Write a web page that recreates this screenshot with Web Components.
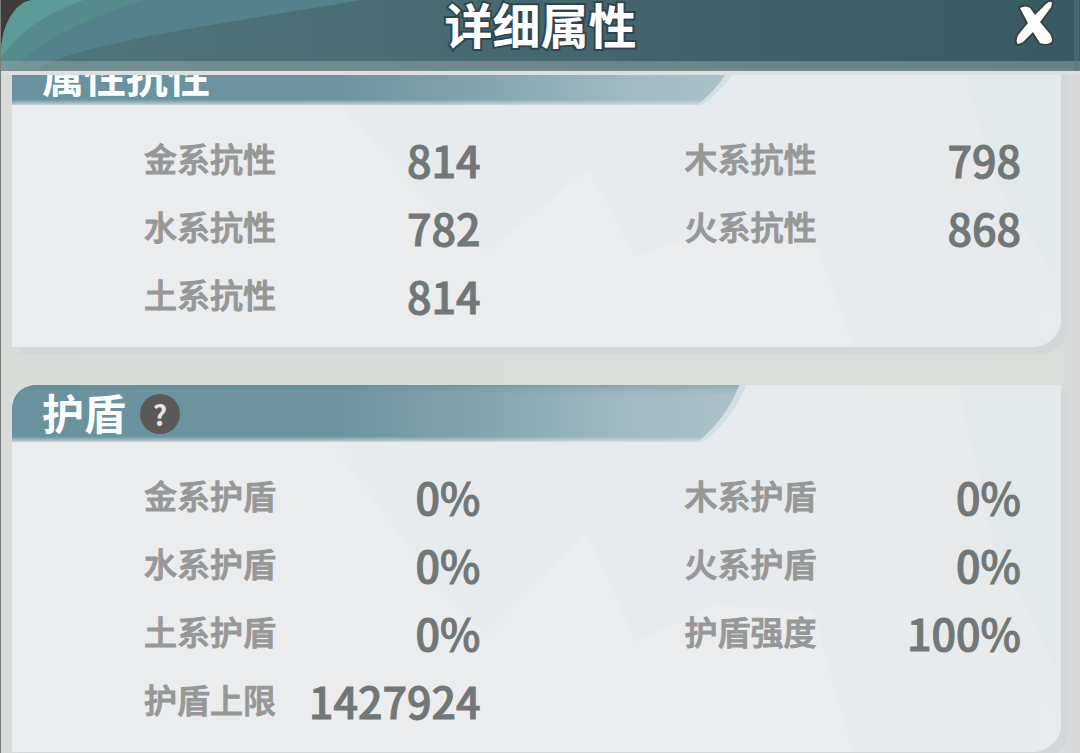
<!DOCTYPE html>
<html lang="zh-CN">
<head>
<meta charset="UTF-8">
<meta name="viewport" content="width=device-width, initial-scale=1">
<title>详细属性</title>
<style>
    body {
        margin: 0;
        background: #413c3c;
        font-family: "Noto Sans CJK SC", "Noto Sans", sans-serif;
    }
</style>
</head>
<body>

<attribute-dialog heading="详细属性">
    <attribute-section heading="属性抗性">
        <attribute-item label="金系抗性" value="814"></attribute-item>
        <attribute-item label="木系抗性" value="798"></attribute-item>
        <attribute-item label="水系抗性" value="782"></attribute-item>
        <attribute-item label="火系抗性" value="868"></attribute-item>
        <attribute-item label="土系抗性" value="814"></attribute-item>
    </attribute-section>
    <attribute-section heading="护盾">
        <help-button slot="action"></help-button>
        <attribute-item label="金系护盾" value="0%"></attribute-item>
        <attribute-item label="木系护盾" value="0%"></attribute-item>
        <attribute-item label="水系护盾" value="0%"></attribute-item>
        <attribute-item label="火系护盾" value="0%"></attribute-item>
        <attribute-item label="土系护盾" value="0%"></attribute-item>
        <attribute-item label="护盾强度" value="100%"></attribute-item>
        <attribute-item label="护盾上限" value="1427924"></attribute-item>
    </attribute-section>
</attribute-dialog>

<script>
class AttributeItem extends HTMLElement {
    constructor() {
        super();
        this.attachShadow({ mode: 'open' });
    }

    connectedCallback() {
        this.shadowRoot.innerHTML = `
            <style>
                :host {
                    display: flex;
                    align-items: center;
                    justify-content: space-between;
                    height: 68px;
                    white-space: nowrap;
                }

                .label {
                    color: #969898;
                    font-size: 33px;
                    font-weight: 500;
                    line-height: 64px;
                    padding-bottom: 2px;
                    -webkit-text-stroke: 1px #969898;
                }

                .value {
                    color: #717777;
                    font-size: 43px;
                    font-weight: 500;
                    line-height: 64px;
                    -webkit-text-stroke: 1px #717777;
                }
            </style>
            <span class="label">${this.getAttribute('label')}</span>
            <span class="value">${this.getAttribute('value')}</span>
        `;
    }
}

class HelpButton extends HTMLElement {
    constructor() {
        super();
        this.attachShadow({ mode: 'open' });
        this.shadowRoot.innerHTML = `
            <style>
                :host {
                    display: block;
                }

                button {
                    display: grid;
                    place-items: center;
                    width: 40px;
                    height: 40px;
                    padding: 0;
                    border: none;
                    border-radius: 50%;
                    background: #5b5958;
                    color: #e6e6e6;
                    font-family: inherit;
                    font-size: 28px;
                    font-weight: 700;
                    line-height: 40px;
                    cursor: pointer;
                }
            </style>
            <button type="button" aria-label="说明">?</button>
        `;
    }
}

class AttributeSection extends HTMLElement {
    constructor() {
        super();
        this.attachShadow({ mode: 'open' });
    }

    connectedCallback() {
        this.shadowRoot.innerHTML = `
            <style>
                :host {
                    display: block;
                }

                section {
                    display: grid;
                    border-radius: 22px 0 28px 0;
                    background: #ebecee;
                    box-shadow: 7px 7px 1px #d2d7da;
                }

                .facets,
                .content {
                    grid-area: 1 / 1;
                    min-width: 0;
                }

                .facets {
                    width: 100%;
                    height: 100%;
                    min-height: 0;
                    contain: size;
                    border-radius: 22px 0 28px 0;
                }

                header {
                    display: grid;
                    width: 70%;
                    height: 57px;
                }

                .tab,
                .caption {
                    grid-area: 1 / 1;
                }

                .tab {
                    width: 100%;
                    height: 57px;
                }

                .caption {
                    display: flex;
                    align-items: center;
                    gap: 14px;
                    padding-left: 30px;
                }

                h2 {
                    margin: 0;
                    color: #fbffff;
                    font-size: 42px;
                    font-weight: 700;
                    line-height: 52px;
                    padding-bottom: 4px;
                }

                .items {
                    display: grid;
                    grid-template-columns: 1fr 1fr;
                    column-gap: 204px;
                    padding: 20px 40px 18px 132px;
                }
            </style>
            <section>
                <svg class="facets" viewBox="0 0 1048 300" preserveAspectRatio="none" aria-hidden="true">
                    <defs>
                        <linearGradient id="mist">
                            <stop offset="0" stop-color="#e7ebed"/>
                            <stop offset=".5" stop-color="#e6eaee"/>
                            <stop offset="1" stop-color="#e6ebed"/>
                        </linearGradient>
                    </defs>
                    <path d="M320 50 L430 170 L475 205 L575 122 L623 210 L700 180 L800 185 L840 300 H1048 V0 H560 Z" fill="url(#mist)"/>
                    <path d="M850 0 H945 L985 150 L1048 240 V270 L990 215 L870 100 Z" fill="#e8e9ea"/>
                    <path d="M945 0 H1048 V240 L980 130 Z" fill="#e3e8ea"/>
                </svg>
                <div class="content">
                    <header>
                        <svg class="tab" viewBox="0 0 734 57" preserveAspectRatio="none" aria-hidden="true">
                            <defs>
                                <linearGradient id="tab">
                                    <stop offset="0" stop-color="#6a929e"/>
                                    <stop offset=".45" stop-color="#6d949e"/>
                                    <stop offset=".65" stop-color="#84a5ad"/>
                                    <stop offset=".85" stop-color="#a2bac2"/>
                                    <stop offset="1" stop-color="#adc1c8"/>
                                </linearGradient>
                                <linearGradient id="edge" x1="0" y1="0" x2="0" y2="1">
                                    <stop offset="0" stop-color="#537d86" stop-opacity=".3"/>
                                    <stop offset=".2" stop-color="#82a3ac" stop-opacity="0"/>
                                    <stop offset=".9" stop-color="#c7d7dd" stop-opacity="0"/>
                                    <stop offset="1" stop-color="#dce6e9" stop-opacity=".8"/>
                                </linearGradient>
                            </defs>
                            <path d="M22 0 H734 Q720 36 690 57 H0 V22 Q2 3 22 0 Z" fill="#d2dfe4"/>
                            <path d="M22 0 H727 Q714 34 685 57 H0 V22 Q2 3 22 0 Z" fill="url(#tab)"/>
                            <path d="M22 0 H727 Q714 34 685 57 H0 V22 Q2 3 22 0 Z" fill="url(#edge)"/>
                        </svg>
                        <div class="caption">
                            <h2>${this.getAttribute('heading')}</h2>
                            <slot name="action"></slot>
                        </div>
                    </header>
                    <div class="items"><slot></slot></div>
                </div>
            </section>
        `;
    }
}

class AttributeDialog extends HTMLElement {
    constructor() {
        super();
        this.attachShadow({ mode: 'open' });
    }

    connectedCallback() {
        this.render();
        this.setupEventListeners();
        // open just below the top edge of the first section
        this.shadowRoot.querySelector('.body').scrollTop = 27;
    }

    render() {
        this.shadowRoot.innerHTML = `
            <style>
                :host {
                    display: block;
                }

                .dialog {
                    display: flex;
                    flex-direction: column;
                    box-sizing: border-box;
                    height: 100vh;
                    border-left: 1px solid #7c7c7a;
                }

                .bar {
                    display: grid;
                    flex: none;
                    border-top-left-radius: 34px 54px;
                    background: linear-gradient(90deg, #4e777a, #4a6d74 35%, #40636b 65%, #385a62);
                }

                .swoosh,
                .row {
                    grid-area: 1 / 1;
                }

                .swoosh {
                    width: 100%;
                    height: 71px;
                    border-top-left-radius: 34px 54px;
                }

                .row {
                    display: grid;
                    grid-template-columns: 1fr auto 1fr;
                    align-items: start;
                }

                h1 {
                    grid-column: 2;
                    margin: 0;
                    color: #ffffff;
                    font-family: "Liberation Sans", "Noto Sans CJK SC", sans-serif;
                    font-size: 48px;
                    font-weight: 700;
                    line-height: 56px;
                    paint-order: stroke fill;
                    -webkit-text-stroke: 4px #30454e;
                }

                .close {
                    justify-self: end;
                    display: block;
                    width: 44px;
                    height: 48px;
                    margin-right: 24px;
                    padding: 0;
                    border: none;
                    background: none;
                    cursor: pointer;
                }

                .close svg {
                    display: block;
                }

                .body {
                    flex: 1;
                    min-height: 0;
                    overflow-y: auto;
                    scrollbar-width: none;
                    border-top: 4px solid #dadfdf;
                    background: linear-gradient(90deg, #d8dcd9, #d9ded9 98%, #d8d5d9);
                }

                .sections {
                    display: flex;
                    flex-direction: column;
                    gap: 38px;
                    padding: 0 19px 24px 11px;
                }
            </style>
            <div class="dialog">
                <div class="bar">
                    <svg class="swoosh" viewBox="0 0 1080 71" preserveAspectRatio="none" aria-hidden="true">
                        <path d="M0 71 V0 H360 C260 18 120 36 55 60 L30 71 Z" fill="#54828a"/>
                        <path d="M0 71 V0 H143 C100 14 50 34 22 60 L14 71 Z" fill="#568b8b"/>
                        <path d="M0 58 V0 H83 C50 12 20 28 0 58 Z" fill="#5b9b98"/>
                        <rect y="61" width="1080" height="10" fill="#93a5a6" fill-opacity=".5"/>
                        <rect y="69" width="1080" height="2" fill="#808c8c" fill-opacity=".6"/>
                        <rect x="1074" width="5" height="71" fill="#56757d" fill-opacity=".5"/>
                    </svg>
                    <div class="row">
                        <h1>${this.getAttribute('heading')}</h1>
                        <button class="close" type="button" aria-label="关闭">
                            <svg width="44" height="48" viewBox="0 0 44 48">
                                <path d="M8 8 Q14 5 18 8 L23 15 L34 4 Q39 0 40 3 Q40 7 37 10 L28 22 L38 34 Q42 41 38 43 Q33 45 28 43 L21 32 L11 42 Q6 45 5 43 Q4 38 7 34 L16 23 Z" fill="#fffefc" stroke="#3b4243" stroke-width="4" stroke-linejoin="round" paint-order="stroke"/>
                            </svg>
                        </button>
                    </div>
                </div>
                <div class="body" tabindex="0">
                    <div class="sections"><slot></slot></div>
                </div>
            </div>
        `;
    }

    setupEventListeners() {
        this.shadowRoot.querySelector('.close').addEventListener('click', () => {
            this.style.display = 'none';
        });
    }
}

customElements.define('attribute-item', AttributeItem);
customElements.define('help-button', HelpButton);
customElements.define('attribute-section', AttributeSection);
customElements.define('attribute-dialog', AttributeDialog);
</script>
</body>
</html>
